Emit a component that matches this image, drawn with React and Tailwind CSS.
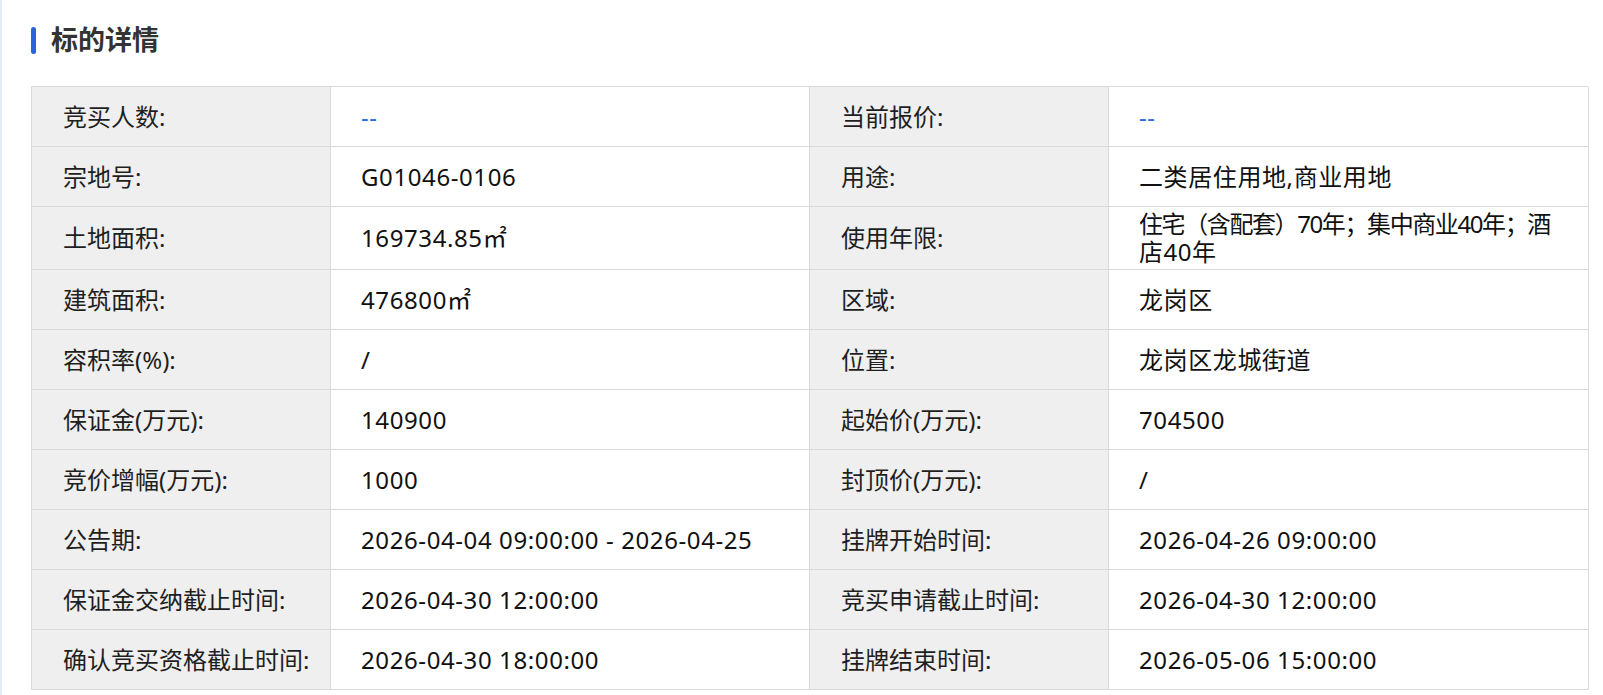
import React from "react";

const rows = [
  ["竞买人数:", "--", "当前报价:", "--"],
  ["宗地号:", "G01046-0106", "用途:", "二类居住用地,商业用地"],
  ["土地面积:", "169734.85㎡", "使用年限:", ["住宅（含配套）70年；集中商业40年；酒", "店40年"]],
  ["建筑面积:", "476800㎡", "区域:", "龙岗区"],
  ["容积率(%):", "/", "位置:", "龙岗区龙城街道"],
  ["保证金(万元):", "140900", "起始价(万元):", "704500"],
  ["竞价增幅(万元):", "1000", "封顶价(万元):", "/"],
  ["公告期:", "2026-04-04 09:00:00 - 2026-04-25", "挂牌开始时间:", "2026-04-26 09:00:00"],
  ["保证金交纳截止时间:", "2026-04-30 12:00:00", "竞买申请截止时间:", "2026-04-30 12:00:00"],
  ["确认竞买资格截止时间:", "2026-04-30 18:00:00", "挂牌结束时间:", "2026-05-06 15:00:00"],
];

function Label({ children }) {
  return (
    <div className="flex min-h-[60px] items-center whitespace-nowrap border-b border-r border-[#d9d9d9] bg-[#efefef] py-[3px] pl-[31px] pr-[8px] text-[#1f1f1f]">
      {children}
    </div>
  );
}

function Value({ children }) {
  const dash = children === "--";
  if (Array.isArray(children)) {
    return (
      <div className="flex min-h-[60px] flex-col justify-center whitespace-nowrap border-b border-r border-[#d9d9d9] bg-white py-[3px] pl-[30px] pr-[8px] text-[#111]">
        <div className="tracking-[-1.4px]">{children[0]}</div>
        <div className="tracking-[0.55px]">{children[1]}</div>
      </div>
    );
  }
  return (
    <div
      className={
        "flex min-h-[60px] items-center whitespace-nowrap border-b border-r border-[#d9d9d9] bg-white py-[3px] pl-[30px] pr-[8px] tracking-[0.6px] " +
        (dash ? "text-[#2b6de0]" : "text-[#111]")
      }
    >
      <span>{children}</span>
    </div>
  );
}

export default function App() {
  return (
    <div
      className="min-h-[695px] w-full border-l-2 border-[#e3eaf3] bg-white pl-[29px] pr-[15px]"
      style={{ fontFamily: '"Noto Sans", "Noto Sans CJK SC", sans-serif' }}
    >
      <div className="flex h-[86px] items-start pt-[26px]">
        <div className="flex items-center gap-[15px]">
          <div className="h-[27px] w-[5px] rounded-full bg-[#2b63de]" />
          <h2 className="text-[27px] font-bold leading-[28px] text-[#333]">标的详情</h2>
        </div>
      </div>
      <div className="grid w-[1557px] grid-cols-[299px_479px_299px_480px] border-l border-t border-[#d9d9d9] text-[24px] leading-[28px]">
        {rows.map((r, i) => (
          <React.Fragment key={i}>
            <Label>{r[0]}</Label>
            <Value>{r[1]}</Value>
            <Label>{r[2]}</Label>
            <Value>{r[3]}</Value>
          </React.Fragment>
        ))}
      </div>
    </div>
  );
}
